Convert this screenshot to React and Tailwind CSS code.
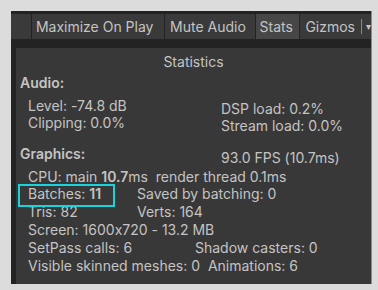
export default function App() {
  return (
    <div className="w-[378px] h-[290px] bg-[#dcdcdc] pt-[11px] pl-[11px] font-[Inter,sans-serif] [font-feature-settings:'calt'_0]">
      <div className="w-[361px] h-[273px] bg-[#232323] flex flex-col overflow-hidden border-r border-[#8a8a8a]">
        <div className="mt-[3px] h-[25px] flex gap-px text-[14px] text-[#c4c4c4] whitespace-nowrap">
          <div className="w-[20px] bg-[#3a3a3a]" />
          <div className="w-[133px] bg-[#3a3a3a] flex items-center pl-[4px]">Maximize On Play</div>
          <div className="w-[90px] bg-[#3a3a3a] flex items-center pl-[5px]">Mute Audio</div>
          <div className="w-[44px] bg-[#474747] flex items-center pl-[4px]">Stats</div>
          <div className="flex-1 bg-[#3a3a3a] flex items-center pl-[5px]">
            Gizmos
            <span className="ml-[6px] w-px h-[15px] bg-[#8a8a8a]" />
            <span className="ml-[4px] text-[10px]">▾</span>
          </div>
        </div>
        <div className="mt-[9px] ml-[5px] flex-1 bg-[#383838] pl-[12px] text-[14px] leading-[18px] text-[#c4c4c4] whitespace-pre">
          <div className="mt-[5px] text-center pr-[12px]">Statistics</div>
          <div className="mt-[3px] -ml-[8px] font-semibold">Audio:</div>
          <div className="mt-[5px] flex leading-[17px]">
            <div className="w-[193px]">
              <div>Level: -74.8 dB</div>
              <div>Clipping: 0.0%</div>
            </div>
            <div className="pt-[3px]">
              <div>DSP load: 0.2%</div>
              <div>Stream load: 0.0%</div>
            </div>
          </div>
          <div className="mt-[11px] flex h-[23px]">
            <div className="w-[193px] -ml-[8px] mr-[8px] font-semibold">Graphics:</div>
            <div className="pt-[4px]">93.0 FPS (10.7ms)</div>
          </div>
          <div className="h-[17px]">
            CPU: main <span className="font-semibold">10.7</span>ms  render thread 0.1ms
          </div>
          <div className="relative flex">
            <div className="absolute left-[-10px] top-[-1px] w-[97px] h-[23px] border-2 border-[#19d3dc]" />
            <div className="w-[109px]">
              Batches: <span className="font-semibold">11</span>
            </div>
            <div>Saved by batching: 0</div>
          </div>
          <div className="flex">
            <div className="w-[109px]">Tris: 82</div>
            <div>Verts: 164</div>
          </div>
          <div>Screen: 1600x720 - 13.2 MB</div>
          <div className="flex">
            <div className="w-[167px]">SetPass calls: 6</div>
            <div>Shadow casters: 0</div>
          </div>
          <div>Visible skinned meshes: 0  Animations: 6</div>
        </div>
      </div>
    </div>
  );
}
